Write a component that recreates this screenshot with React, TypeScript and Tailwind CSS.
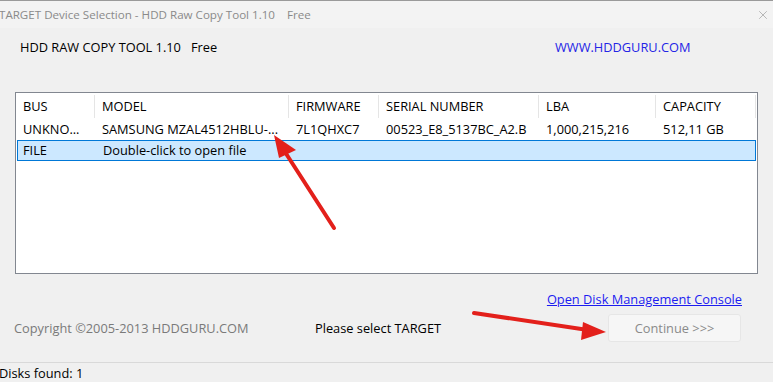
import { X } from 'lucide-react'

const cols = [
  { key: 'bus', label: 'BUS', w: 'w-[79px]' },
  { key: 'model', label: 'MODEL', w: 'w-[194px]' },
  { key: 'fw', label: 'FIRMWARE', w: 'w-[90px]' },
  { key: 'sn', label: 'SERIAL NUMBER', w: 'w-[160px]' },
  { key: 'lba', label: 'LBA', w: 'w-[117px]' },
  { key: 'cap', label: 'CAPACITY', w: 'w-[100px]' },
]

const disk = ['UNKNO...', 'SAMSUNG MZAL4512HBLU-...', '7L1QHXC7', '00523_E8_5137BC_A2.B', '1,000,215,216', '512,11 GB']

export default function App() {
  return (
    <div
      className="relative w-[773px] h-[382px] overflow-hidden bg-[#f0f0f0] text-[12.8px] text-black"
      style={{ fontFamily: '"Open Sans", "Noto Sans", sans-serif' }}
    >
      {/* Title bar */}
      <div className="flex items-center justify-between h-[28px] pt-[1px] bg-[#f3f3f3] border-t border-[#9a9a9a]">
        <span className="-ml-[1px] text-[11.6px] text-[#8a8a8a]">TARGET Device Selection - HDD Raw Copy Tool 1.10&nbsp;&nbsp;&nbsp;&nbsp;Free</span>
        <X className="mr-[3px] w-[14px] h-[14px] text-[#8a8a8a]" strokeWidth={1} />
      </div>

      {/* Header */}
      <div className="flex items-center h-[40px] pl-[20px]">
        <span className="w-[535px]">HDD RAW COPY TOOL 1.10&nbsp;&nbsp;&nbsp;Free</span>
        <span className="text-[#2424e6]">WWW.HDDGURU.COM</span>
      </div>

      {/* Device list */}
      <div className="ml-[15px] mt-[24px] w-[743px] h-[182px] border border-[#828790] bg-white">
        <div className="flex h-[25px] pt-[2px]">
          {cols.map((c) => (
            <div key={c.key} className={`${c.w} flex items-center pl-[7px] border-r border-[#e5e5e5]`}>
              {c.label}
            </div>
          ))}
        </div>
        <div className="flex h-[22px] pt-[1px] items-center">
          {cols.map((c, i) => (
            <div key={c.key} className={`${c.w} pl-[7px] whitespace-nowrap`}>
              {disk[i]}
            </div>
          ))}
        </div>
        <div className="flex items-center h-[21px] mx-[1px] bg-[#cce8ff] border border-[#0078d7]">
          <div className="w-[78px] pl-[5px]">FILE</div>
          <div className="pl-[7px]">Double-click to open file</div>
        </div>
      </div>

      {/* Bottom area */}
      <div className="flex justify-end pr-[31px] mt-[16px]">
        <span className="text-[#1c1cf0] underline">Open Disk Management Console</span>
      </div>
      <div className="flex items-center h-[30px] mt-[4px]">
        <span className="ml-[14px] w-[301px] text-[#7a7a7a]">Copyright ©2005-2013 HDDGURU.COM</span>
        <span className="w-[293px]">Please select TARGET</span>
        <div className="flex items-center justify-center w-[133px] h-[28px] bg-[#f6f6f6] border border-[#e6e6e6] rounded-[3px] text-[#8a8a8a]">
          Continue &gt;&gt;&gt;
        </div>
      </div>

      {/* Status bar */}
      <div className="absolute left-0 right-0 top-[362px] h-[20px] pt-[2px] border-t border-[#d9d9d9] flex items-center">
        <span className="-ml-[1px]">Disks found: 1</span>
      </div>

      {/* Annotation arrows */}
      <svg className="absolute inset-0 pointer-events-none" width="773" height="382">
        <line x1="334" y1="228" x2="285" y2="152" stroke="#e3201b" strokeWidth="4" strokeLinecap="round" />
        <polygon points="274,135 296,150 279,158" fill="#e3201b" />
        <line x1="474" y1="313" x2="588" y2="330" stroke="#e3201b" strokeWidth="4" strokeLinecap="round" />
        <polygon points="606,332 583,322 581,340" fill="#e3201b" />
      </svg>
    </div>
  )
}
